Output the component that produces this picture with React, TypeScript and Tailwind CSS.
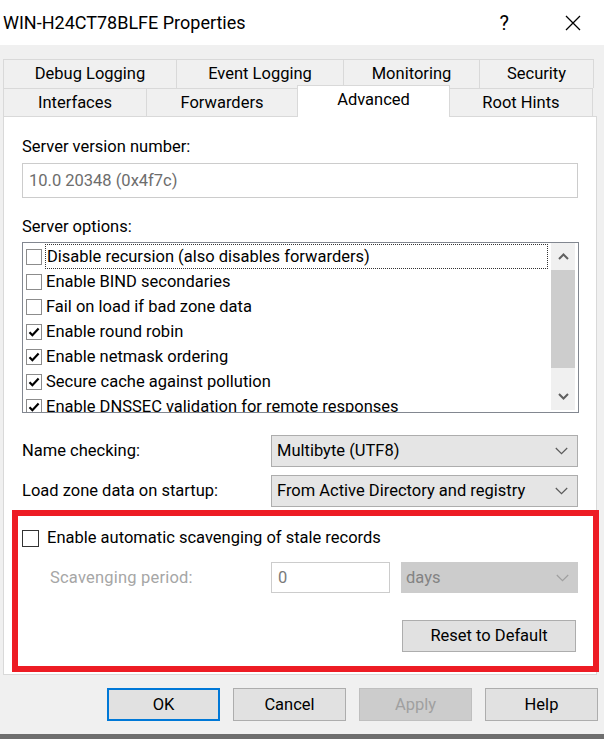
import React from "react";

function Box({ checked, dark, size = 16 }: { checked?: boolean; dark?: boolean; size?: number }) {
  return (
    <div
      className={`shrink-0 bg-white border flex items-center justify-center ${dark ? "border-[#333333]" : "border-[#8c8c8c]"}`}
      style={{ width: size, height: size }}
    >
      {checked && (
        <svg width="12" height="12" viewBox="0 0 12 12">
          <path d="M1.5 6.2 L4.4 9.2 L10.6 2.6" fill="none" stroke="#000" strokeWidth="2.2" />
        </svg>
      )}
    </div>
  );
}

function Chevron({ color = "#5a5a5a" }: { color?: string }) {
  return (
    <svg width="13" height="8" viewBox="0 0 13 8">
      <path d="M0.8 1 L6.5 6.7 L12.2 1" fill="none" stroke={color} strokeWidth="1.2" />
    </svg>
  );
}

function Select({ text, w, h }: { text: string; w: number; h: number }) {
  return (
    <div
      className="bg-[#e5e5e5] border border-[#adadad] flex items-center pl-[5px] pr-[9px]"
      style={{ width: w, height: h }}
    >
      <span className="flex-1">{text}</span>
      <Chevron />
    </div>
  );
}

const rows: { t: string; c: boolean }[] = [
  { t: "Disable recursion (also disables forwarders)", c: false },
  { t: "Enable BIND secondaries", c: false },
  { t: "Fail on load if bad zone data", c: false },
  { t: "Enable round robin", c: true },
  { t: "Enable netmask ordering", c: true },
  { t: "Secure cache against pollution", c: true },
  { t: "Enable DNSSEC validation for remote responses", c: true },
];

export default function App() {
  return (
    <div className="w-[604px] h-[739px] bg-[#f0f0f0] font-['Roboto','Liberation_Sans',sans-serif] text-black text-[16.5px] leading-[20px] flex flex-col overflow-hidden">
      {/* Title bar */}
      <div className="h-[45px] bg-white flex items-center shrink-0">
        <span className="ml-[3px] text-[18px]">WIN-H24CT78BLFE Properties</span>
        <span className="ml-auto text-[20px] mr-[56px]">?</span>
        <svg width="16" height="16" viewBox="0 0 16 16" className="mr-[23px]">
          <path d="M1 1 L15 15 M15 1 L1 15" stroke="#000" strokeWidth="1.3" />
        </svg>
      </div>

      {/* Tabs */}
      <div className="mt-[14px] flex ml-[3px] h-[29px] shrink-0">
        {[
          ["Debug Logging", 173],
          ["Event Logging", 167],
          ["Monitoring", 136],
          ["Security", 115],
        ].map(([t, w], i) => (
          <div
            key={t as string}
            className={`border-t border-l border-[#d9d9d9] flex items-center justify-center ${i === 3 ? "border-r" : ""}`}
            style={{ width: w as number }}
          >
            {t}
          </div>
        ))}
      </div>
      <div className="flex ml-[3px] h-[28px] shrink-0">
        <div className="w-[143px] border-t border-l border-[#d9d9d9] flex items-center justify-center">Interfaces</div>
        <div className="w-[151px] border-t border-l border-[#d9d9d9] flex items-center justify-center">Forwarders</div>
        <div className="relative z-10 w-[153px] h-[32px] -mt-[3px] bg-white border-t border-l border-r border-[#d9d9d9] flex justify-center pt-[4px]">
          Advanced
        </div>
        <div className="w-[143px] border-t border-r border-[#d9d9d9] flex items-center justify-center">Root Hints</div>
      </div>

      {/* Panel */}
      <div className="ml-[3px] w-[594px] h-[559px] shrink-0 bg-white border border-[#d9d9d9] flex flex-col px-[18px]">
        <div className="mt-[20px]">Server version number:</div>
        <div className="mt-[6px] h-[35px] border border-[#cccccc] flex items-center px-[6px] text-[#6d6d6d]">
          10.0 20348 (0x4f7c)
        </div>
        <div className="mt-[19px]">Server options:</div>

        {/* List box */}
        <div className="mt-[5px] w-[557px] h-[171px] border border-[#828790] flex overflow-hidden shrink-0">
          <div className="flex-1 pt-[1px] pl-[3px] overflow-hidden">
            {rows.map((r, i) => (
              <div key={r.t} className="h-[25px] flex items-center">
                <Box checked={r.c} />
                <div
                  className={`ml-[3px] h-[25px] flex items-center pl-[1px] whitespace-nowrap ${i === 0 ? "w-[503px] border border-dotted border-[#333]" : ""}`}
                >
                  {r.t}
                </div>
              </div>
            ))}
          </div>
          <div className="w-[24px] ml-[3px] mr-[3px] mb-[2px] bg-[#f0f0f0] flex flex-col">
            <div className="h-[27px] flex items-center justify-center">
              <svg width="11" height="7" viewBox="0 0 11 7">
                <path d="M1 6 L5.5 1.5 L10 6" fill="none" stroke="#606060" strokeWidth="2" />
              </svg>
            </div>
            <div className="h-[98px] bg-[#cdcdcd]" />
            <div className="flex-1" />
            <div className="h-[27px] flex items-center justify-center">
              <svg width="11" height="7" viewBox="0 0 11 7">
                <path d="M1 1 L5.5 5.5 L10 1" fill="none" stroke="#606060" strokeWidth="2" />
              </svg>
            </div>
          </div>
        </div>

        <div className="mt-[22px] flex items-center">
          <span className="w-[249px]">Name checking:</span>
          <Select text="Multibyte (UTF8)" w={307} h={32} />
        </div>
        <div className="mt-[8px] flex items-center">
          <span className="w-[249px]">Load zone data on startup:</span>
          <Select text="From Active Directory and registry" w={307} h={32} />
        </div>

        {/* Highlighted scavenging section */}
        <div className="mt-[3px] -ml-[10px] -mr-[21px] h-[162px] border-[6px] border-[#ed1c24] flex flex-col shrink-0">
          <div className="mt-[12px] pl-[4px] h-[20px] flex items-center">
            <Box dark size={17} />
            <span className="ml-[8px]">Enable automatic scavenging of stale records</span>
          </div>
          <div className="mt-[14px] h-[31px] flex items-center">
            <span className="pl-[32px] w-[253px] text-[#a6a6a6] tracking-[0.2px]">Scavenging period:</span>
            <div className="w-[119px] h-[31px] border border-[#cccccc] bg-white flex items-center pl-[6px] text-[#7a7a7a]">0</div>
            <div className="ml-[11px] w-[177px] h-[31px] bg-[#cccccc] flex items-center pl-[5px] pr-[9px] text-[#838383]">
              <span className="flex-1">days</span>
              <Chevron color="#a0a0a0" />
            </div>
          </div>
          <div className="mt-[27px] flex justify-end pr-[17px]">
            <div className="w-[174px] h-[32px] bg-[#e1e1e1] border border-[#adadad] flex items-center justify-center">
              Reset to Default
            </div>
          </div>
        </div>
      </div>

      {/* Buttons */}
      <div className="mt-[13px] flex justify-end gap-[13px] pr-[6px] shrink-0">
        <div className="w-[113px] h-[33px] bg-[#e1e1e1] border-2 border-[#0078d7] flex items-center justify-center">OK</div>
        <div className="w-[113px] h-[33px] bg-[#e1e1e1] border border-[#adadad] flex items-center justify-center">Cancel</div>
        <div className="w-[113px] h-[33px] bg-[#cccccc] border border-[#bfbfbf] flex items-center justify-center text-[#a0a0a0]">Apply</div>
        <div className="w-[113px] h-[33px] bg-[#e1e1e1] border border-[#adadad] flex items-center justify-center">Help</div>
      </div>

      <div className="mt-auto h-[5px] bg-[#6e6e6e] shrink-0" />
    </div>
  );
}
